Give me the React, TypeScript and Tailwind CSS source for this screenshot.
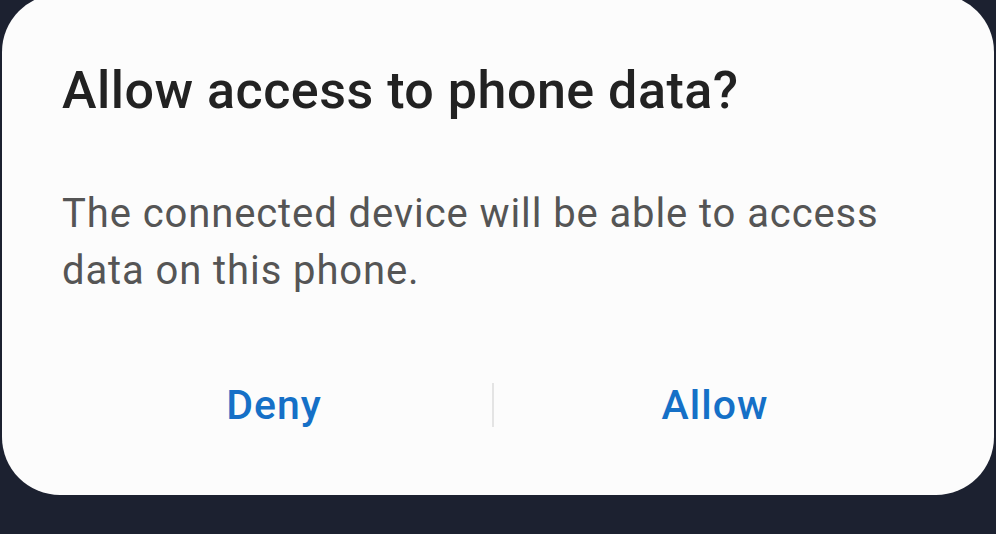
export default function App() {
  return (
    <div className="w-[996px] h-[534px] overflow-hidden bg-[#1c2130] px-[2px]" style={{ fontFamily: 'Roboto, "Noto Sans", sans-serif' }}>
      <div className="-mt-[6px] h-[501px] rounded-[58px] bg-[#fcfcfc] pt-[67px] flex flex-col">
        <h1 className="pl-[60px] text-[52px] leading-[60px] font-medium text-[#222222] tracking-[0.5px]">
          Allow access to phone data?
        </h1>
        <p className="mt-[64px] pl-[60px] pr-[40px] text-[40px] leading-[57px] text-[#555555] tracking-[0.9px]">
          The connected device will be able to access data on this phone.
        </p>
        <div className="mt-[82px] flex items-center pl-[54px]">
          <button className="w-[436px] text-center text-[41px] leading-[48px] font-medium text-[#1570c7] tracking-[1px]">Deny</button>
          <div className="w-[2px] h-[44px] bg-[#e4e4e4]" />
          <button className="w-[442px] text-center text-[41px] leading-[48px] font-medium text-[#1570c7] tracking-[1px]">Allow</button>
        </div>
      </div>
    </div>
  );
}
